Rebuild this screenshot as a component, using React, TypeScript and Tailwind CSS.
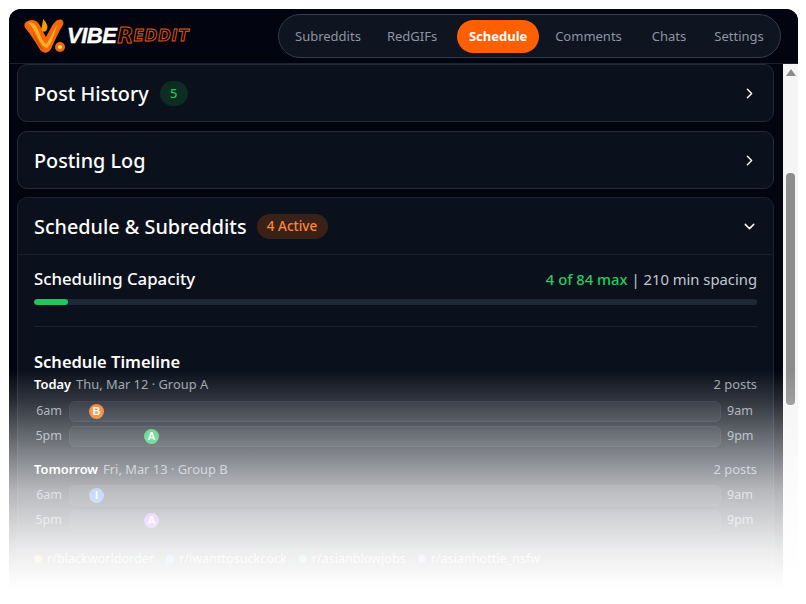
import { ChevronDown, ChevronRight } from "lucide-react";

const legend = [
  { name: "r/blackworldorder", dot: "bg-[#f97316]" },
  { name: "r/iwanttosuckcock", dot: "bg-[#3b82f6]" },
  { name: "r/asianblowjobs", dot: "bg-[#22c55e]" },
  { name: "r/asianhottie_nsfw", dot: "bg-[#a855f7]" },
];

function Logo() {
  return (
    <div className="flex items-center">
      <svg width="43" height="36" viewBox="0 0 43 36" className="shrink-0">
        <path d="M1 5 C5 1 12 1 15 6 C18 11 20 16 22 19 C25 14 27 8 31 4 C35 0 41 1 39 7 C35 13 31 22 27 31 C24 36 18 36 15 30 C11 23 6 16 2 11 C0 9 0 7 1 5 Z" fill="#f76707" />
        <path d="M4 5 C9 3 12 7 14 12 C17 19 19 24 22 26 C25 24 28 15 33 7 C31 15 27 27 23 30 C18 30 14 20 11 14 C9 10 7 7 4 5 Z" fill="#ffb224" />
        <path d="M8 13 C12 18 15 26 20 32 C15 31 12 22 8 13 Z" fill="#d9480f" />
        <path d="M19 1 C23 5 25 9 22 13 C19 15 16 12 18 8 C18 6 19 4 19 1 Z" fill="#f59f00" />
        <circle cx="36" cy="29" r="5" fill="#f76707" />
        <circle cx="36" cy="29" r="2" fill="#ffe08a" />
      </svg>
      <span className="font-['Liberation_Sans',sans-serif] text-[22px] leading-none font-bold tracking-[-0.5px] text-white italic [-webkit-text-stroke:0.4px_#ffffff]">VIBE</span>
      <span className="ml-[1px] flex items-center font-['DejaVu_Sans',sans-serif] leading-none font-bold text-transparent italic [-webkit-text-stroke:0.9px_#ea580c]">
        <span className="text-[21px]">R</span>
        <span className="text-[15px] tracking-[1px]">EDDIT</span>
      </span>
    </div>
  );
}

function Header() {
  return (
    <header className="flex h-[55px] shrink-0 items-center justify-between border-b border-[#1a2130] bg-[#02040f] pr-[17px] pl-[15px]">
      <Logo />
      <nav className="flex h-[44px] w-[503px] items-center rounded-full border border-[#333d4f] bg-[#0e1420] pl-[16px] text-[13px] text-[#8d95a3]">
        <span className="pt-[2px]">Subreddits</span>
        <span className="ml-[26px] pt-[2px]">RedGIFs</span>
        <span className="ml-[20px] flex h-[33px] w-[82px] items-center justify-center rounded-full bg-[#ff5f00] pt-[2px] font-bold text-white">Schedule</span>
        <span className="ml-[16px] pt-[2px]">Comments</span>
        <span className="ml-[30px] pt-[2px]">Chats</span>
        <span className="ml-[28px] pt-[2px]">Settings</span>
      </nav>
    </header>
  );
}

function CollapsedCard({ title, count }: { title: string; count?: number }) {
  return (
    <section className="flex h-[58px] shrink-0 items-center rounded-[10px] border border-[#232b39] bg-[#0b111c] px-[16px]">
      <h2 className="pt-[2px] text-[19.8px] font-medium text-white">{title}</h2>
      {count !== undefined && (
        <span className="mt-[1px] ml-[11px] flex h-[25px] w-[28px] items-center justify-center rounded-full bg-[#0d2c22] text-[13px] font-medium text-[#22c55e]">
          {count}
        </span>
      )}
      <ChevronRight size={17} className="mr-[-1px] ml-auto text-white" />
    </section>
  );
}

function TimelineRow({ from, to, left, letter, dot }: { from: string; to: string; left: string; letter: string; dot: string }) {
  return (
    <div className="flex h-[21px] items-center">
      <span className="w-[28px] pl-[1px] text-right text-[12.5px] text-[#99a1ae]">{from}</span>
      <div className="relative mr-[6px] ml-[7px] h-full flex-1 rounded-[6px] border border-[#222936] bg-[#181e2a]">
        <span className={`absolute top-[2px] flex size-[15px] items-center justify-center rounded-full font-['Liberation_Sans',sans-serif] text-[11px] font-bold text-white ${left} ${dot}`}>
          {letter}
        </span>
      </div>
      <span className="w-[30px] text-[12.5px] text-[#99a1ae]">{to}</span>
    </div>
  );
}

function DayGroup({ day, date, rowsClass, children }: { day: string; date: string; rowsClass: string; children: React.ReactNode }) {
  return (
    <div>
      <div className="flex h-[20px] items-center justify-between text-[12.9px]">
        <div>
          <span className="font-semibold text-white">{day}</span>
          <span className="ml-[5px] text-[#99a1ae]">{date}</span>
        </div>
        <span className="text-[#99a1ae]">2 posts</span>
      </div>
      <div className={`flex flex-col gap-[4px] ${rowsClass}`}>{children}</div>
    </div>
  );
}

export default function App() {
  return (
    <div className="relative h-[604px] w-[806px] overflow-hidden bg-white pt-[9px] pl-[9px] font-['Noto_Sans',sans-serif]">
      <div className="flex h-[595px] w-[789px] flex-col overflow-hidden rounded-t-[12px] bg-[#02040f]">
        <Header />
        <div className="flex min-h-0 flex-1">
          <main className="flex min-w-0 flex-1 flex-col gap-[9px] pr-[9px] pl-[8px]">
            <CollapsedCard title="Post History" count={5} />
            <CollapsedCard title="Posting Log" />
            <section className="mt-[-1px] h-[420px] shrink-0 rounded-[10px] border border-[#1c2330] bg-[#0b111c]">
              <div className="flex h-[57px] items-center border-b border-[#171e2a] px-[16px]">
                <h2 className="pt-[2px] text-[19.8px] font-medium text-white">Schedule &amp; Subreddits</h2>
                <span className="mt-[1px] ml-[10px] flex h-[25px] w-[71px] items-center justify-center rounded-full bg-[#3a2117] text-[13.5px] font-medium text-[#f58a3c]">
                  4 Active
                </span>
                <ChevronDown size={17} className="mr-[-1px] ml-auto text-white" />
              </div>
              <div className="px-[16px] pt-[12px]">
                <div className="flex h-[24px] items-center justify-between">
                  <span className="text-[16.8px] font-medium text-white">Scheduling Capacity</span>
                  <span className="text-[14.8px] text-[#c2c8d1]">
                    <span className="font-medium text-[#24cc62]">4 of 84 max</span> | 210 min spacing
                  </span>
                </div>
                <div className="mt-[8px] h-[6px] overflow-hidden rounded-full bg-[#1e2736]">
                  <div className="h-full w-[34px] rounded-full bg-[#22c55e]" />
                </div>
                <div className="mt-[21px] border-t border-[#1a2130]" />
                <h3 className="mt-[21px] text-[16.5px] leading-[27px] font-semibold text-white">Schedule Timeline</h3>
                <DayGroup day="Today" date="Thu, Mar 12 · Group A" rowsClass="mt-[6px]">
                  <TimelineRow from="6am" to="9am" left="left-[19px]" letter="B" dot="bg-[#f97316]" />
                  <TimelineRow from="5pm" to="9pm" left="left-[74px]" letter="A" dot="bg-[#22c55e]" />
                </DayGroup>
                <div className="mt-[13px]">
                  <DayGroup day="Tomorrow" date="Fri, Mar 13 · Group B" rowsClass="mt-[5px]">
                    <TimelineRow from="6am" to="9am" left="left-[19px]" letter="I" dot="bg-[#3b82f6]" />
                    <TimelineRow from="5pm" to="9pm" left="left-[74px]" letter="A" dot="bg-[#a855f7]" />
                  </DayGroup>
                </div>
                <div className="mt-[19px] flex gap-[12px]">
                  {legend.map((l) => (
                    <span key={l.name} className="flex items-center gap-[5px] text-[12.6px] text-[#d5d9e0]">
                      <span className={`size-[8px] rounded-full ${l.dot}`} />
                      {l.name}
                    </span>
                  ))}
                </div>
              </div>
            </section>
          </main>
          <aside className="relative w-[15px] shrink-0 bg-[#f4f4f4]">
            <div className="mx-auto mt-[5px] size-0 border-x-[5px] border-b-[7px] border-x-transparent border-b-[#8a8a8a]" />
            <div className="absolute top-[109px] left-[3px] h-[232px] w-[9px] rounded-[4px] bg-[#8c8c8c]" />
          </aside>
        </div>
      </div>
      <div className="pointer-events-none absolute inset-x-0 top-[360px] bottom-0 bg-[linear-gradient(to_bottom,rgba(255,255,255,0)_10px,rgba(255,255,255,0.15)_40px,rgba(255,255,255,0.4)_80px,rgba(255,255,255,0.52)_100px,rgba(255,255,255,0.7)_130px,rgba(255,255,255,0.81)_160px,rgba(255,255,255,0.92)_190px,rgba(255,255,255,0.985)_220px,rgba(255,255,255,1)_230px)]" />
    </div>
  );
}
